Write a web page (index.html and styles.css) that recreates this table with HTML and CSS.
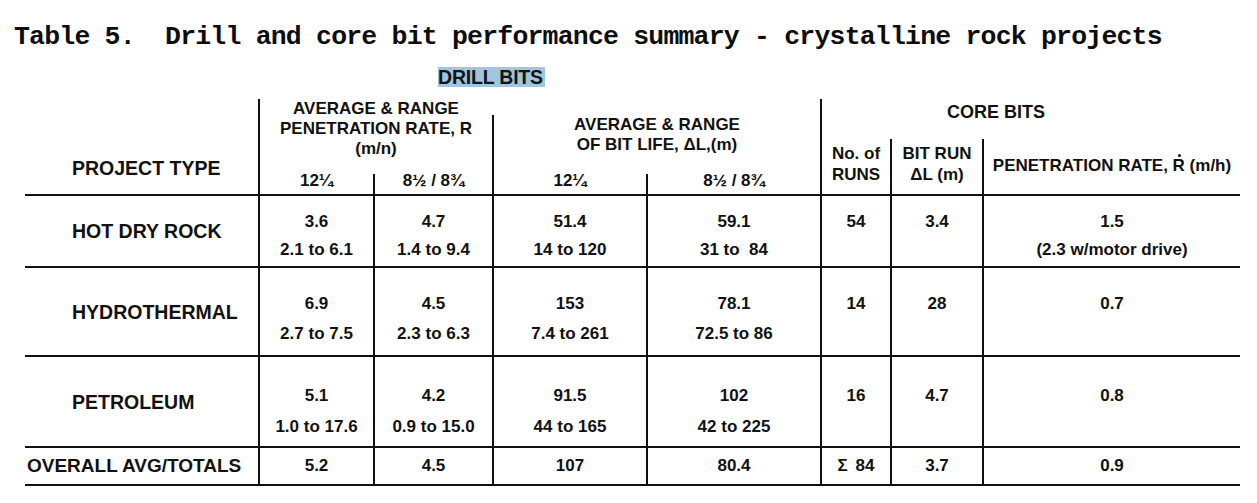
FILE: index.html
```html
<!DOCTYPE html>
<html lang="en">
<head>
<meta charset="utf-8">
<title>Table 5. Drill and core bit performance summary</title>
<link rel="stylesheet" href="styles.css">
</head>
<body>
<h1 class="title">Table 5.  Drill and core bit performance summary - crystalline rock projects</h1>
<div class="drill"><span class="drill-label">DRILL BITS</span></div>
<div class="grid">
  <div class="h ptype">PROJECT TYPE</div>
  <div class="h pen">AVERAGE &amp; RANGE<br>PENETRATION RATE, R<br>(m/n)</div>
  <div class="h life">AVERAGE &amp; RANGE<br>OF BIT LIFE, ΔL,(m)</div>
  <div class="h core">CORE BITS</div>
  <div class="h runs"><div>No. of<br>RUNS</div></div>
  <div class="h bitrun"><div>BIT RUN<br>ΔL (m)</div></div>
  <div class="h prate"><div>PENETRATION RATE, <span class="rdot">R</span> (m/h)</div></div>
  <div class="h sub c2">12¼</div>
  <div class="h sub c3">8½ / 8¾</div>
  <div class="h sub c4">12¼</div>
  <div class="h sub c5">8½ / 8¾</div>

  <div class="cell lab r1">HOT DRY ROCK</div>
  <div class="cell val r1"><span>3.6</span><span>2.1 to 6.1</span></div>
  <div class="cell val r1"><span>4.7</span><span>1.4 to 9.4</span></div>
  <div class="cell val r1"><span>51.4</span><span>14 to 120</span></div>
  <div class="cell val r1"><span>59.1</span><span>31 to &nbsp;84</span></div>
  <div class="cell val r1"><span>54</span></div>
  <div class="cell val r1"><span>3.4</span></div>
  <div class="cell val r1"><span>1.5</span><span>(2.3 w/motor drive)</span></div>

  <div class="cell lab r2">HYDROTHERMAL</div>
  <div class="cell val r2"><span>6.9</span><span>2.7 to 7.5</span></div>
  <div class="cell val r2"><span>4.5</span><span>2.3 to 6.3</span></div>
  <div class="cell val r2"><span>153</span><span>7.4 to 261</span></div>
  <div class="cell val r2"><span>78.1</span><span>72.5 to 86</span></div>
  <div class="cell val r2"><span>14</span></div>
  <div class="cell val r2"><span>28</span></div>
  <div class="cell val r2"><span>0.7</span></div>

  <div class="cell lab r3">PETROLEUM</div>
  <div class="cell val r3"><span>5.1</span><span>1.0 to 17.6</span></div>
  <div class="cell val r3"><span>4.2</span><span>0.9 to 15.0</span></div>
  <div class="cell val r3"><span>91.5</span><span>44 to 165</span></div>
  <div class="cell val r3"><span>102</span><span>42 to 225</span></div>
  <div class="cell val r3"><span>16</span></div>
  <div class="cell val r3"><span>4.7</span></div>
  <div class="cell val r3"><span>0.8</span></div>

  <div class="cell lab r4 total">OVERALL AVG/TOTALS</div>
  <div class="cell val r4"><span>5.2</span></div>
  <div class="cell val r4"><span>4.5</span></div>
  <div class="cell val r4"><span>107</span></div>
  <div class="cell val r4"><span>80.4</span></div>
  <div class="cell val r4 sigma"><span>Σ 84</span></div>
  <div class="cell val r4"><span>3.7</span></div>
  <div class="cell val r4"><span>0.9</span></div>
</div>
</body>
</html>
```

FILE: styles.css
```css
* { box-sizing: border-box; }

body {
  margin: 0;
  background: #ffffff;
  color: #111111;
  font-family: "Liberation Sans", Arial, sans-serif;
}

.title {
  margin: 22px 0 0 14px;
  font-family: "Liberation Mono", "DejaVu Sans Mono", monospace;
  font-weight: bold;
  font-size: 26.5px;
  letter-spacing: -0.8px;
  line-height: 31px;
  white-space: pre;
  color: #0d0d0d;
}

.drill {
  margin-top: 14px;
  padding-left: 438px;
  height: 20px;
}

.drill-label {
  display: inline-block;
  font-weight: bold;
  font-size: 19.5px;
  line-height: 20px;
  letter-spacing: -0.2px;
  padding-right: 2px;
  background: #9fc6df;
  color: #141414;
}

.grid {
  margin: 12px 0 0 25px;
  display: grid;
  grid-template-columns: 233px 115px 119px 154px 174px 70px 92px 258px;
  grid-template-rows: 40px 35px 20px 72px 89px 91px 40px;
  font-weight: bold;
  font-size: 17px;
  line-height: 20px;
}

.h { text-align: center; }

.ptype {
  grid-column: 1;
  grid-row: 1 / 4;
  display: flex;
  align-items: flex-end;
  padding: 0 0 15px 47px;
  font-size: 19.5px;
  line-height: 22px;
  text-align: left;
}

.pen {
  grid-column: 2 / 4;
  grid-row: 1 / 3;
  border-left: 2px solid #111;
}

.life {
  grid-column: 4 / 6;
  grid-row: 1 / 3;
  margin-top: 16px;
  border-left: 2px solid #111;
}

.core {
  grid-column: 6 / 9;
  grid-row: 1;
  border-left: 2px solid #111;
  padding: 3px 70px 0 0;
  font-size: 18px;
}

.runs, .bitrun, .prate {
  grid-row: 2 / 4;
  border-left: 2px solid #111;
  display: flex;
  flex-direction: column;
  justify-content: center;
  line-height: 21px;
  padding-bottom: 6px;
}
.runs { grid-column: 6; }
.bitrun { grid-column: 7; }
.prate { grid-column: 8; white-space: nowrap; padding-bottom: 3px; }

.rdot { position: relative; }
.rdot::after {
  content: "";
  position: absolute;
  left: 50%;
  top: -2px;
  width: 3px;
  height: 3px;
  margin-left: -1px;
  background: #111;
  border-radius: 50%;
}

.sub {
  grid-row: 3;
  border-left: 2px solid #111;
  line-height: 14px;
}
.c2 { grid-column: 2; }
.c3 { grid-column: 3; }
.c4 { grid-column: 4; }
.c5 { grid-column: 5; }

.cell { border-top: 2px solid #111; }

.lab {
  display: flex;
  align-items: center;
  padding-left: 47px;
  font-size: 19.5px;
}
.lab.total { padding-left: 2px; font-size: 19px; }

.val {
  border-left: 2px solid #111;
  display: flex;
  flex-direction: column;
  align-items: center;
  text-align: center;
}

.val.r1 { padding-top: 16px; gap: 8px; }
.val.r2 { padding-top: 26px; gap: 10px; }
.val.r3 { padding-top: 29px; gap: 11px; }
.r4 { border-bottom: 2px solid #111; }
.val.r4 { justify-content: center; }
.sigma span { word-spacing: 3px; }
```
